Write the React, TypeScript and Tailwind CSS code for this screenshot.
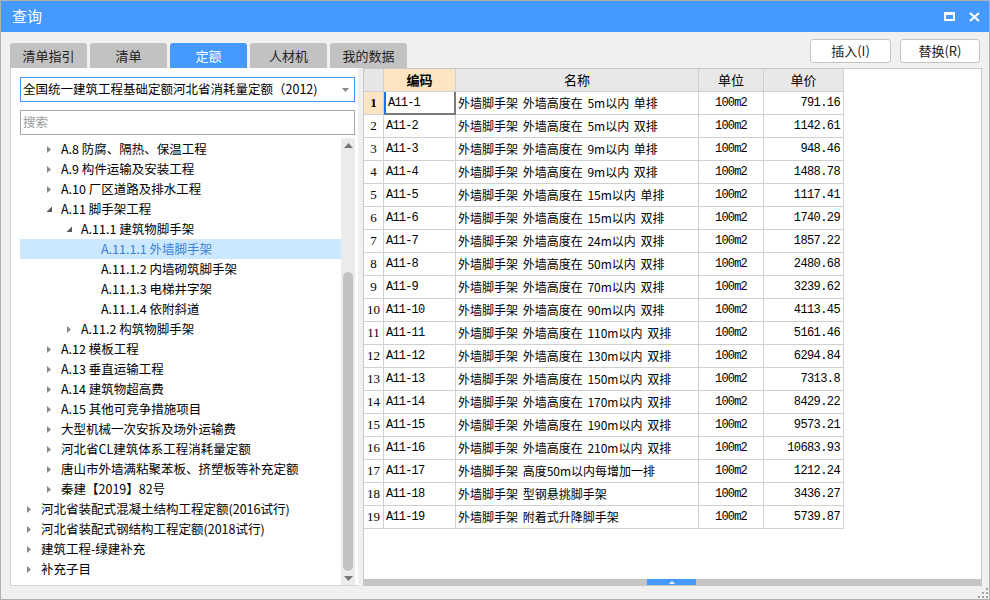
import React from "react";

const CJK = '"Noto Sans CJK SC", "Noto Sans", sans-serif';
const GRIDFONT = '"Liberation Mono", "Noto Sans CJK SC", monospace';

type Node = { level: number; text: string; state: "c" | "e" | "leaf"; selected?: boolean };

const tree: Node[] = [
  { level: 1, text: "A.8 防腐、隔热、保温工程", state: "c" },
  { level: 1, text: "A.9 构件运输及安装工程", state: "c" },
  { level: 1, text: "A.10 厂区道路及排水工程", state: "c" },
  { level: 1, text: "A.11 脚手架工程", state: "e" },
  { level: 2, text: "A.11.1 建筑物脚手架", state: "e" },
  { level: 3, text: "A.11.1.1 外墙脚手架", state: "leaf", selected: true },
  { level: 3, text: "A.11.1.2 内墙砌筑脚手架", state: "leaf" },
  { level: 3, text: "A.11.1.3 电梯井字架", state: "leaf" },
  { level: 3, text: "A.11.1.4 依附斜道", state: "leaf" },
  { level: 2, text: "A.11.2 构筑物脚手架", state: "c" },
  { level: 1, text: "A.12 模板工程", state: "c" },
  { level: 1, text: "A.13 垂直运输工程", state: "c" },
  { level: 1, text: "A.14 建筑物超高费", state: "c" },
  { level: 1, text: "A.15 其他可竞争措施项目", state: "c" },
  { level: 1, text: "大型机械一次安拆及场外运输费", state: "c" },
  { level: 1, text: "河北省CL建筑体系工程消耗量定额", state: "c" },
  { level: 1, text: "唐山市外墙满粘聚苯板、挤塑板等补充定额", state: "c" },
  { level: 1, text: "秦建【2019】82号", state: "c" },
  { level: 0, text: "河北省装配式混凝土结构工程定额(2016试行)", state: "c" },
  { level: 0, text: "河北省装配式钢结构工程定额(2018试行)", state: "c" },
  { level: 0, text: "建筑工程-绿建补充", state: "c" },
  { level: 0, text: "补充子目", state: "c" },
];

const P = "外墙脚手架 外墙高度在 ";
const rows: [string, string, string][] = [
  ["A11-1", P + "5m以内 单排", "791.16"],
  ["A11-2", P + "5m以内 双排", "1142.61"],
  ["A11-3", P + "9m以内 单排", "948.46"],
  ["A11-4", P + "9m以内 双排", "1488.78"],
  ["A11-5", P + "15m以内 单排", "1117.41"],
  ["A11-6", P + "15m以内 双排", "1740.29"],
  ["A11-7", P + "24m以内 双排", "1857.22"],
  ["A11-8", P + "50m以内 双排", "2480.68"],
  ["A11-9", P + "70m以内 双排", "3239.62"],
  ["A11-10", P + "90m以内 双排", "4113.45"],
  ["A11-11", P + "110m以内 双排", "5161.46"],
  ["A11-12", P + "130m以内 双排", "6294.84"],
  ["A11-13", P + "150m以内 双排", "7313.8"],
  ["A11-14", P + "170m以内 双排", "8429.22"],
  ["A11-15", P + "190m以内 双排", "9573.21"],
  ["A11-16", P + "210m以内 双排", "10683.93"],
  ["A11-17", "外墙脚手架 高度50m以内每增加一排", "1212.24"],
  ["A11-18", "外墙脚手架 型钢悬挑脚手架", "3436.27"],
  ["A11-19", "外墙脚手架 附着式升降脚手架", "5739.87"],
];

const tabs = ["清单指引", "清单", "定额", "人材机", "我的数据"];

const Arrow = ({ state }: { state: Node["state"] }) => {
  if (state === "leaf") return <span className="w-[15px]" />;
  return (
    <span className="flex h-full w-[15px] items-center">
      {state === "c" ? (
        <svg width="6" height="9" viewBox="0 0 6 9">
          <path d="M1 1 L5 4.5 L1 8 Z" fill="#8a8a8a" />
        </svg>
      ) : (
        <svg width="7" height="7" viewBox="0 0 7 7">
          <path d="M6 0.5 L6 6 L0.5 6 Z" fill="#5a5a5a" />
        </svg>
      )}
    </span>
  );
};

const TreeRow = ({ n }: { n: Node }) => (
  <div
    className={
      "flex h-[20px] items-center whitespace-nowrap text-[12.5px] leading-[20px] " +
      (n.selected ? "bg-[#cce8ff] text-[#3b82d6]" : "text-black")
    }
    style={{ paddingLeft: 6 + n.level * 20 }}
  >
    <Arrow state={n.state} />
    <span>{n.text}</span>
  </div>
);

export default function App() {
  return (
    <div
      className="flex h-[600px] w-[990px] flex-col overflow-hidden border border-[#b0b0b0] bg-[#f0f0f0]"
      style={{ fontFamily: CJK }}
    >
      {/* title bar */}
      <div className="flex h-[31px] shrink-0 items-center justify-between bg-[#4599ff] pl-[11px] pr-[9px]">
        <span className="text-[15px] text-white">查询</span>
        <div className="flex items-center gap-[14px]">
          <svg width="11" height="9" viewBox="0 0 11 9">
            <rect x="1" y="1" width="9" height="7" fill="none" stroke="white" strokeWidth="2" />
            <rect x="1" y="1" width="9" height="2" fill="white" />
          </svg>
          <svg width="11" height="10" viewBox="0 0 11 10">
            <path d="M1 1 L10 9 M10 1 L1 9" stroke="white" strokeWidth="2.2" />
          </svg>
        </div>
      </div>

      {/* tabs + buttons */}
      <div className="flex h-[36px] shrink-0 justify-between pl-[9px] pr-[9px]">
        <div className="flex items-end gap-[3px]">
          {tabs.map((t) => (
            <div
              key={t}
              className={
                "flex h-[25px] w-[77px] items-center justify-center rounded-t-[3px] text-[13px] " +
                (t === "定额" ? "bg-[#4599ff] text-white" : "bg-[#c2c2c2] text-[#222]")
              }
            >
              {t}
            </div>
          ))}
        </div>
        <div className="flex gap-[9px] pt-[7px]">
          <button className="h-[24px] w-[81px] rounded-[3px] border border-[#c4c4c4] bg-white text-[13px] text-[#222]">
            插入(I)
          </button>
          <button className="h-[24px] w-[80px] rounded-[3px] border border-[#c4c4c4] bg-white text-[13px] text-[#222]">
            替换(R)
          </button>
        </div>
      </div>

      {/* main */}
      <div className="flex h-[518px] shrink-0 pl-[9px]">
        {/* left panel */}
        <div className="flex w-[348px] flex-col border-b border-l border-[#d4d4d4] bg-white pl-[9px] pr-[3px]">
          <div className="mt-[9px] flex h-[25px] w-[335px] items-center justify-between border border-[#4599ff] pl-[2px] pr-[5px]">
            <span className="text-[12.5px] text-black">全国统一建筑工程基础定额河北省消耗量定额（2012)</span>
            <svg width="7" height="4" viewBox="0 0 7 4">
              <path d="M0 0 L7 0 L3.5 4 Z" fill="#888" />
            </svg>
          </div>
          <div className="mt-[8px] flex h-[25px] w-[335px] items-center border border-[#a8a8a8] pl-[2px]">
            <span className="text-[12.5px] text-[#9a9a9a]">搜索</span>
          </div>
          <div className="mt-[3px] flex min-h-0 flex-1">
            <div className="flex-1 overflow-hidden pt-[1px]">
              {tree.map((n, i) => (
                <TreeRow key={i} n={n} />
              ))}
            </div>
            <div className="flex w-[14px] flex-col items-center bg-[#ebebeb]">
              <div className="flex h-[14px] items-center justify-center">
                <svg width="9" height="5" viewBox="0 0 9 5">
                  <path d="M0 5 L9 5 L4.5 0 Z" fill="#777" />
                </svg>
              </div>
              <div className="mt-[120px] w-[10px] flex-1 rounded-[5px] bg-[#c2c2c2]" />
              <div className="flex h-[14px] items-center justify-center">
                <svg width="9" height="5" viewBox="0 0 9 5">
                  <path d="M0 0 L9 0 L4.5 5 Z" fill="#777" />
                </svg>
              </div>
            </div>
          </div>
        </div>

        {/* grid */}
        <div
          className="ml-[5px] flex w-[619px] flex-col border border-[#c8c8c8] bg-white"
          style={{ fontFamily: GRIDFONT }}
        >
          <div className="flex-1">
            <div className="flex h-[23px] text-[13px]">
              <div className="w-[20px] border-b border-r border-[#d0d0d0] bg-[#e6e6e6]" />
              <div
                className="flex w-[72px] items-center justify-center border-b border-r border-[#d0d0d0] bg-[#fde5c4] font-bold"
                style={{ fontFamily: CJK }}
              >
                编码
              </div>
              <div className="flex w-[243px] items-center justify-center border-b border-r border-[#d0d0d0] bg-[#e8e8e8]" style={{ fontFamily: CJK }}>
                名称
              </div>
              <div className="flex w-[65px] items-center justify-center border-b border-r border-[#d0d0d0] bg-[#e8e8e8]" style={{ fontFamily: CJK }}>
                单位
              </div>
              <div className="flex w-[80px] items-center justify-center border-b border-r border-[#d0d0d0] bg-[#e8e8e8]" style={{ fontFamily: CJK }}>
                单价
              </div>
            </div>
            {rows.map((r, i) => (
              <div key={i} className="flex h-[23px] text-[12px] text-black">
                <div
                  className={
                    "flex w-[20px] items-center justify-center border-b border-r border-[#d0d0d0] " +
                    (i === 0 ? "bg-[#fde5c4] font-bold" : "bg-white")
                  }
                  style={{ fontFamily: '"Liberation Serif", serif', fontSize: 13 }}
                >
                  {i + 1}
                </div>
                <div
                  className={
                    "flex w-[72px] items-center pl-[2px] " +
                    (i === 0
                      ? "border-b-2 border-l-2 border-r-2 border-b-[#7a7a7a] border-l-[#1a73e8] border-r-[#7a7a7a]"
                      : "border-b border-r border-[#d0d0d0]")
                  }
                  style={{ letterSpacing: -0.8 }}
                >
                  {r[0]}
                </div>
                <div
                  className="flex w-[243px] items-center whitespace-pre border-b border-r border-[#d0d0d0] pl-[2px] text-[12px]"
                  style={{ fontFamily: CJK, wordSpacing: 2 }}
                >
                  {r[1]}
                </div>
                <div
                  className="flex w-[65px] items-center justify-center border-b border-r border-[#d0d0d0]"
                  style={{ letterSpacing: -0.8 }}
                >
                  100m2
                </div>
                <div
                  className="flex w-[80px] items-center justify-end border-b border-r border-[#d0d0d0] pr-[3px]"
                  style={{ letterSpacing: -0.6 }}
                >
                  {r[2]}
                </div>
              </div>
            ))}
          </div>
          <div className="flex h-[6px] bg-[#c4c4c4]">
            <div className="ml-[283px] flex w-[49px] items-center justify-center bg-[#4599ff]">
              <svg width="6" height="3" viewBox="0 0 6 3">
                <path d="M0 3 L6 3 L3 0 Z" fill="white" />
              </svg>
            </div>
          </div>
        </div>
      </div>

      {/* bottom */}
      <div className="flex flex-1 items-end justify-end pb-[1px] pr-[1px]">
        <svg width="10" height="10" viewBox="0 0 10 10">
          {[
            [8, 0],
            [8, 4],
            [4, 4],
            [8, 8],
            [4, 8],
            [0, 8],
          ].map(([x, y], k) => (
            <rect key={k} x={x} y={y} width="2" height="2" fill="#a0a0a0" />
          ))}
        </svg>
      </div>
    </div>
  );
}
